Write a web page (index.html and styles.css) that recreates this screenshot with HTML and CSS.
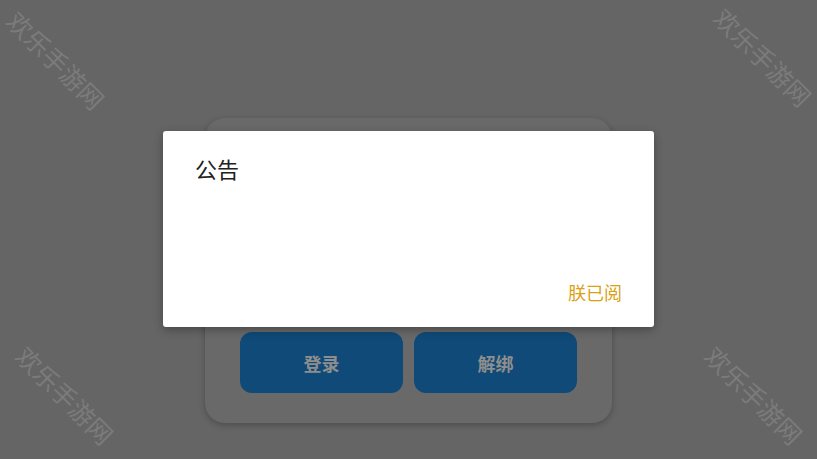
FILE: index.html
```html
<!DOCTYPE html>
<html lang="zh">
<head>
<meta charset="utf-8">
<title>公告</title>
<link rel="stylesheet" href="styles.css">
</head>
<body>
<div class="page">
  <div class="card">
    <div class="actions">
      <button class="btn">登录</button>
      <button class="btn">解绑</button>
    </div>
  </div>
</div>
<div class="wm wm-tl">欢乐手游网</div>
<div class="wm wm-tr">欢乐手游网</div>
<div class="wm wm-bl">欢乐手游网</div>
<div class="wm wm-br">欢乐手游网</div>
<div class="dialog">
  <div class="dialog-title">公告</div>
  <div class="dialog-actions"><span class="ok">朕已阅</span></div>
</div>
</body>
</html>
```
FILE: styles.css
```css
html, body {
  margin: 0;
  padding: 0;
  width: 817px;
  height: 459px;
  overflow: hidden;
  background: #656565;
  font-family: "Noto Sans CJK SC", "Noto Sans", sans-serif;
}
.page {
  display: flex;
  justify-content: center;
  padding-top: 118px;
}
.card {
  width: 407px;
  height: 305px;
  box-sizing: border-box;
  background: #696969;
  border-radius: 20px;
  box-shadow: 0 2px 6px rgba(0,0,0,0.25);
  display: flex;
  flex-direction: column;
  justify-content: flex-end;
  padding: 0 35px 30px;
}
.actions {
  display: flex;
  gap: 11px;
}
.btn {
  flex: 1;
  height: 61px;
  border: none;
  border-radius: 12px;
  background: #0f4a78;
  color: #8e8e8e;
  font-family: inherit;
  font-size: 18px;
  font-weight: bold;
}
.wm {
  position: absolute;
  font-size: 25px;
  line-height: 25px;
  color: #7b7b7b;
  white-space: nowrap;
  transform: translate(-50%, -50%) rotate(45deg);
}
.wm-tl { left: 56px; top: 60px; }
.wm-tr { left: 763px; top: 57px; }
.wm-bl { left: 65px; top: 395px; }
.wm-br { left: 754px; top: 395px; }
.dialog {
  position: absolute;
  left: 163px;
  top: 131px;
  width: 491px;
  height: 196px;
  box-sizing: border-box;
  background: #ffffff;
  border-radius: 3px;
  box-shadow: 0 3px 10px rgba(0,0,0,0.3);
  padding: 22px 32px 24px 32px;
  display: flex;
  flex-direction: column;
  justify-content: space-between;
}
.dialog-title {
  font-size: 22px;
  line-height: 30px;
  color: #212121;
}
.dialog-actions {
  display: flex;
  justify-content: flex-end;
}
.ok {
  font-size: 18px;
  line-height: 22px;
  color: #d9a213;
}
```
